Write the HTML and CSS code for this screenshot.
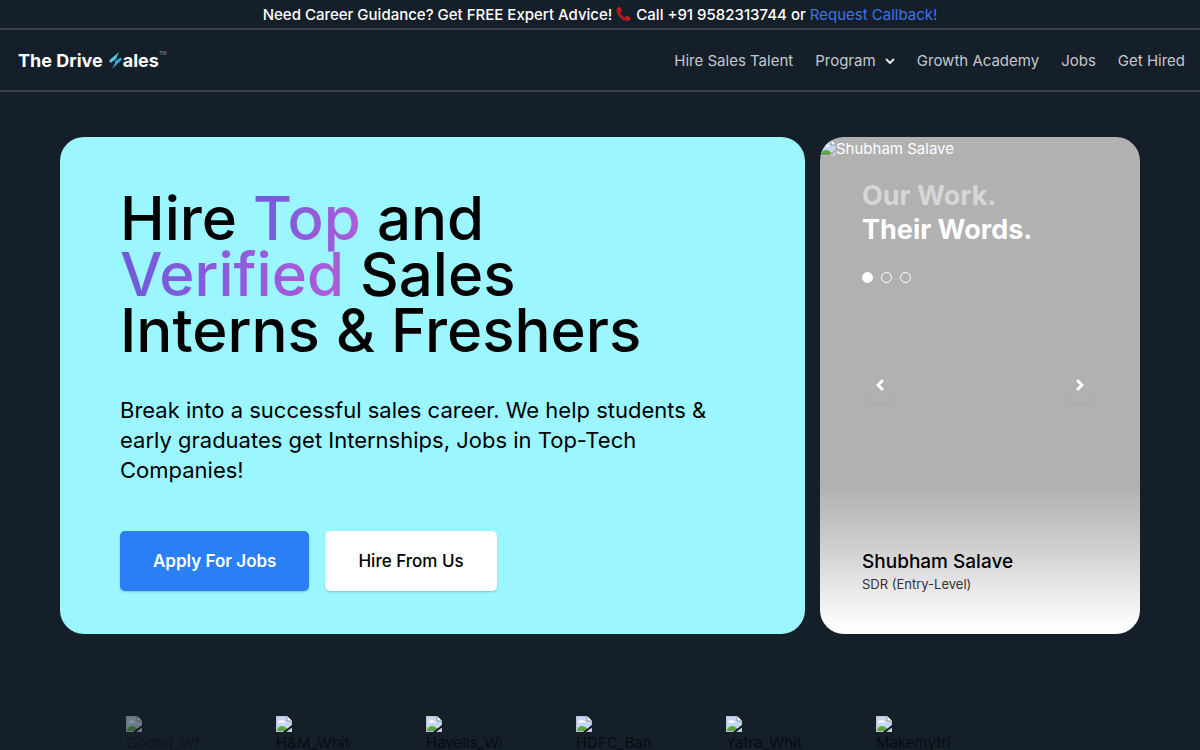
FILE: index.html
```html
<!DOCTYPE html>
<html lang="en">
  <head>
    <meta charset="UTF-8" />
    <meta name="viewport" content="width=device-width, initial-scale=1.0" />
    <title>The Drive Sales</title>
    <link rel="stylesheet" href="styles.css">
  </head>
  <body>
    <!-- shared shape for the missing picture icon -->
    <svg class="defs" width="0" height="0" aria-hidden="true">
      <symbol id="missing" viewBox="0 0 16 16">
        <path d="M0 0h11l5 5v11H0z" fill="#c0c4ca" />
        <path d="M1 1h9.500l4.500 4.500V15H1z" fill="#c5d7f5" />
        <path d="M2 6.500c0-1.500 1.500-2 2.200-1.400C4.700 3.500 7 3.500 7.500 5c1-.2 1.700.5 1.600 1.500z" fill="#fff" />
        <path d="M1 15v-1.500C3 9.300 8 8.700 11.500 13L10 15z" fill="#5ba843" />
        <path d="M11 0v5h5z" fill="#fff" />
        <path d="M11 0v5h5" fill="none" stroke="#8b9098" />
        <path class="tear" d="M7 16l9-7v2.500L10 16z" />
      </symbol>
    </svg>

    <div class="topbar">
      <span>Need Career Guidance? Get FREE Expert Advice!</span>
      <svg class="phone" viewBox="0 0 16 16" aria-hidden="true">
        <path d="M1.500 1.800C3 .6 4 1 4.700 2.300l1 2c.3.800 0 1.300-.8 2-.4.400-.3.900 0 1.400.7 1.300 1.800 2.400 3.100 3.100.6.400 1.100.4 1.500-.1.600-.8 1.200-1.100 2-.7l2.300 1.200c1.200.7 1.300 1.800.1 2.900-1.400 1.300-3.500 1.300-5.600.2C4.600 12.400 2 9.500.8 6.200.2 4.400.2 2.900 1.500 1.800z" fill="#c81d1f" />
        <path d="M1.500 3.200c1.200 4.500 4.600 8.600 9.300 10.500" fill="none" stroke="#7d1016" />
      </svg>
      <span>Call +91 9582313744 or <a href="#callback">Request Callback!</a></span>
    </div>

    <header class="header">
      <a class="logo" href="#">
        <span>The Drive</span>
        <svg class="bolt" viewBox="0 0 13 18" aria-hidden="true">
          <path d="M10 1L0 9.500 1.500 12 7 8z" fill="#58c4dc" />
          <path d="M11.500 6.500L6 10v2l-3 6 10-9.500z" fill="#3fa3c4" />
        </svg>
        <span>ales</span><small>TM</small>
      </a>
      <nav class="nav">
        <a href="#talent">Hire Sales Talent</a>
        <a href="#program">Program
          <svg class="chevron" viewBox="0 0 10 6" aria-hidden="true"><path d="M1 1l4 4 4-4" /></svg>
        </a>
        <a href="#academy">Growth Academy</a>
        <a href="#jobs">Jobs</a>
        <a href="#hired">Get Hired</a>
      </nav>
    </header>

    <main class="hero">
      <section class="intro">
        <h1>Hire <span>Top</span> and<br><span>Verified</span> Sales<br>Interns &amp; Freshers</h1>
        <p>Break into a successful sales career. We help students &amp; early graduates get Internships, Jobs in Top-Tech Companies!</p>
        <div class="actions">
          <button class="btn primary" type="button">Apply For Jobs</button>
          <button class="btn" type="button">Hire From Us</button>
        </div>
      </section>

      <section class="story">
        <div class="photo">
          <svg class="missing" aria-hidden="true"><use href="#missing" /></svg>
          <span>Shubham Salave</span>
        </div>
        <h2><span>Our Work.</span><br>Their Words.</h2>
        <div class="dots">
          <button class="dot active" type="button" aria-label="Slide 1"></button>
          <button class="dot" type="button" aria-label="Slide 2"></button>
          <button class="dot" type="button" aria-label="Slide 3"></button>
        </div>
        <div class="arrows">
          <button class="arrow" type="button" aria-label="Previous">
            <svg viewBox="0 0 8 12"><path d="M6 2L2 6l4 4" /></svg>
          </button>
          <button class="arrow" type="button" aria-label="Next">
            <svg viewBox="0 0 8 12"><path d="M2 2l4 4-4 4" /></svg>
          </button>
        </div>
        <div class="person">
          <h3>Shubham Salave</h3>
          <p>SDR (Entry-Level)</p>
        </div>
      </section>
    </main>

    <section class="brands">
      <div class="brand faded"><svg class="missing" aria-hidden="true"><use href="#missing" /></svg><span>Godrej_White</span></div>
      <div class="brand"><svg class="missing" aria-hidden="true"><use href="#missing" /></svg><span>H&amp;M_White</span></div>
      <div class="brand"><svg class="missing" aria-hidden="true"><use href="#missing" /></svg><span>Havells_White</span></div>
      <div class="brand"><svg class="missing" aria-hidden="true"><use href="#missing" /></svg><span>HDFC_Bank</span></div>
      <div class="brand"><svg class="missing" aria-hidden="true"><use href="#missing" /></svg><span>Yatra_White</span></div>
      <div class="brand"><svg class="missing" aria-hidden="true"><use href="#missing" /></svg><span>Makemytrip</span></div>
    </section>
  </body>
</html>
```

FILE: styles.css
```css
* {
  box-sizing: border-box;
}

body {
  margin: 0;
  background: #151f2a;
  color: #fff;
  font-family: Inter, "Liberation Sans", sans-serif;
  font-size: 15px;
}

h1,
h2,
h3,
p {
  margin: 0;
}

a {
  color: inherit;
  text-decoration: none;
}

button {
  font-family: inherit;
  cursor: pointer;
}

.defs {
  position: absolute;
}

.topbar {
  display: flex;
  justify-content: center;
  align-items: center;
  gap: 4px;
  height: 30px;
  border-bottom: 2px solid #3e4045;
  font-weight: 500;
}

.topbar a {
  color: #3f72e8;
  font-weight: 400;
}

.phone {
  width: 16px;
  height: 16px;
}

.header {
  display: flex;
  justify-content: space-between;
  align-items: center;
  height: 62px;
  padding: 0 15px 0 18px;
  border-bottom: 2px solid #3e4045;
}

.logo {
  display: flex;
  align-items: center;
  font-size: 18px;
  font-weight: 700;
}

.bolt {
  width: 13px;
  height: 18px;
  margin: 0 1px 0 6px;
}

.logo small {
  align-self: flex-start;
  color: #8b9098;
  font-size: 5px;
  font-weight: 400;
}

.nav {
  display: flex;
  gap: 22px;
  color: #c4c8cc;
}

.chevron {
  width: 10px;
  height: 6px;
  margin: 0 0 2px 5px;
  fill: none;
  stroke: #e4e6e8;
  stroke-width: 2;
}

.hero {
  display: grid;
  grid-template-columns: 1fr 320px;
  gap: 15px;
  padding: 45px 60px 0;
}

.intro {
  padding: 53px 60px 43px;
  border-radius: 24px;
  background: #9bf6ff;
  color: #000;
}

.intro h1 {
  font-size: 60px;
  font-weight: 500;
  line-height: 56px;
}

.intro h1 span {
  background: linear-gradient(to right, #6e5bdb, #b05bdb);
  background-clip: text;
  -webkit-background-clip: text;
  color: transparent;
}

.intro p {
  margin-top: 37px;
  font-size: 22px;
  line-height: 30px;
}

.actions {
  display: flex;
  gap: 16px;
  margin-top: 46px;
}

.btn {
  height: 60px;
  padding: 0 33px;
  border: none;
  border-radius: 5px;
  background: #fff;
  box-shadow: 0 1px 2px rgba(0, 0, 0, 0.2);
  color: #000;
  font-size: 17px;
  font-weight: 500;
}

.btn.primary {
  background: #2b7ff5;
  color: #fff;
  font-weight: 600;
}

.story {
  position: relative;
  display: flex;
  flex-direction: column;
  padding: 42px 42px 40px;
  border-radius: 24px;
  overflow: hidden;
  background: linear-gradient(to bottom, #b1b1b1 70%, #c8c8c8 80%, #fff 99%);
}

.photo {
  position: absolute;
  top: 3px;
  left: 0;
  display: flex;
  line-height: 18px;
}

.missing {
  display: block;
  width: 16px;
  height: 16px;
  color: #0b1017;
}

.photo .missing {
  color: #b1b1b1;
}

.tear {
  fill: currentColor;
}

.story h2 {
  font-size: 27px;
  line-height: 34px;
}

.story h2 span {
  color: #d6d6d6;
}

.dots {
  display: flex;
  gap: 8px;
  margin-top: 25px;
}

.dot {
  width: 11px;
  height: 11px;
  padding: 0;
  border: 1px solid #fff;
  border-radius: 50%;
  background: none;
}

.dot.active {
  background: #fff;
}

.arrows {
  display: flex;
  justify-content: space-between;
  margin-top: 85px;
}

.arrow {
  width: 36px;
  height: 36px;
  border: none;
  border-radius: 50%;
  background: #b1b1b1;
  box-shadow: 0 1px 1px rgba(0, 0, 0, 0.04);
}

.arrow svg {
  width: 8px;
  height: 12px;
  fill: none;
  stroke: #fff;
  stroke-width: 3;
  stroke-linecap: round;
}

.person {
  margin-top: auto;
  color: #000;
}

.person h3 {
  font-size: 19px;
  font-weight: 500;
  line-height: 24px;
}

.person p {
  color: #333;
  font-size: 13px;
  line-height: 20px;
}

.brands {
  display: flex;
  gap: 75px;
  height: 116px;
  padding: 82px 0 0 126px;
  overflow: hidden;
}

.brand {
  flex: none;
  width: 75px;
  overflow: hidden;
  color: #080c12;
  line-height: 22px;
}

.brand.faded {
  opacity: 0.5;
}
```
